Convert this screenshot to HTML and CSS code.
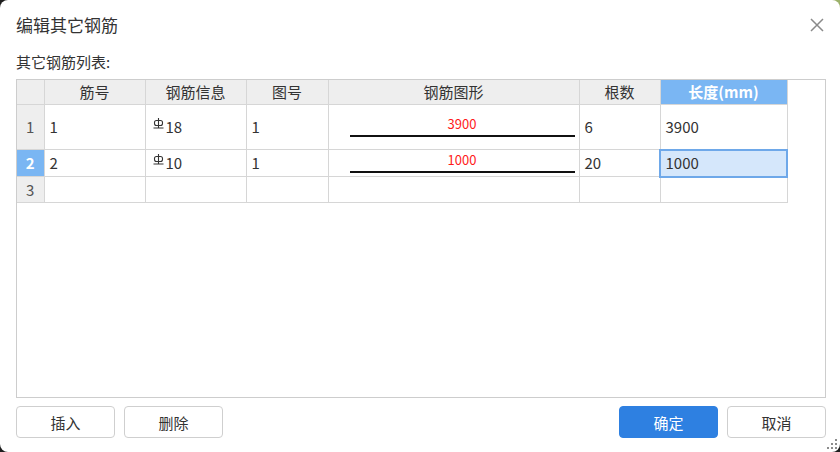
FILE: index.html
```html
<!DOCTYPE html>
<html lang="zh-CN">
<head>
<meta charset="utf-8">
<title>编辑其它钢筋</title>
<link rel="stylesheet" href="styles.css">
</head>
<body>
<div class="dialog">
  <div class="titlebar">
    <span class="title">编辑其它钢筋</span>
    <span class="close" aria-label="关闭">
      <svg width="14" height="14" viewBox="0 0 14 14"><path d="M1 1 L13 13 M13 1 L1 13" stroke="#8a8a8a" stroke-width="1.5" fill="none"/></svg>
    </span>
  </div>
  <div class="label">其它钢筋列表:</div>
  <div class="grid-wrap">
    <table class="grid">
      <colgroup>
        <col class="c-rh"><col class="c-no"><col class="c-info"><col class="c-fig"><col class="c-shape"><col class="c-count"><col class="c-len">
      </colgroup>
      <thead>
        <tr class="hrow">
          <th class="rh"></th>
          <th>筋号</th>
          <th>钢筋信息</th>
          <th>图号</th>
          <th>钢筋图形</th>
          <th>根数</th>
          <th class="sel-h">长度(mm)</th>
        </tr>
      </thead>
      <tbody>
        <tr class="r1">
          <td class="rh">1</td>
          <td>1</td>
          <td><svg class="sym" width="11" height="11" viewBox="0 0 11 11"><path d="M5.5 0 V9.5 M0.5 10 H10.5" stroke="#333" stroke-width="1.1" fill="none"/><rect x="1.5" y="2.5" width="8" height="5" rx="2" stroke="#333" stroke-width="1.1" fill="none"/></svg>18</td>
          <td>1</td>
          <td><div class="shape"><span class="dim">3900</span><span class="line"></span></div></td>
          <td>6</td>
          <td>3900</td>
        </tr>
        <tr class="r2">
          <td class="rh sel-h">2</td>
          <td>2</td>
          <td><svg class="sym" width="11" height="11" viewBox="0 0 11 11"><path d="M5.5 0 V9.5 M0.5 10 H10.5" stroke="#333" stroke-width="1.1" fill="none"/><rect x="1.5" y="2.5" width="8" height="5" rx="2" stroke="#333" stroke-width="1.1" fill="none"/></svg>10</td>
          <td>1</td>
          <td><div class="shape"><span class="dim">1000</span><span class="line"></span></div></td>
          <td>20</td>
          <td class="sel-cell">1000</td>
        </tr>
        <tr class="r3">
          <td class="rh">3</td>
          <td></td><td></td><td></td><td></td><td></td><td></td>
        </tr>
      </tbody>
    </table>
  </div>
  <div class="footer">
    <div class="group">
      <button class="btn">插入</button>
      <button class="btn">删除</button>
    </div>
    <div class="group">
      <button class="btn primary">确定</button>
      <button class="btn">取消</button>
    </div>
  </div>
  <svg class="grip" width="12" height="12" viewBox="0 0 12 12">
    <g fill="#8c8c8c">
      <rect x="9" y="1" width="2" height="2"/>
      <rect x="5" y="5" width="2" height="2"/><rect x="9" y="5" width="2" height="2"/>
      <rect x="1" y="9" width="2" height="2"/><rect x="5" y="9" width="2" height="2"/><rect x="9" y="9" width="2" height="2"/>
    </g>
  </svg>
</div>
</body>
</html>
```

FILE: styles.css
```css
html, body {
  margin: 0;
  padding: 0;
}
body {
  width: 840px;
  height: 452px;
  overflow: hidden;
  background: linear-gradient(#9cb16a, #9cb16a) 262px 0 / 578px 14px no-repeat, #1e1e1e;
  font-family: "Noto Sans CJK SC", "Microsoft YaHei", sans-serif;
  color: #333;
}
.dialog {
  position: relative;
  width: 840px;
  height: 452px;
  box-sizing: border-box;
  background: #fff;
  border-radius: 8px;
  padding: 0 14px 0 16px;
  display: flex;
  flex-direction: column;
}
.titlebar {
  height: 50px;
  display: flex;
  align-items: center;
  justify-content: space-between;
}
.title {
  font-size: 17px;
  color: #333;
  line-height: 20px;
}
.close {
  width: 14px;
  height: 14px;
  margin-right: 2px;
  display: flex;
}
.label {
  margin-top: 2px;
  font-size: 15px;
  line-height: 20px;
  height: 20px;
  color: #333;
}
.grid-wrap {
  margin-top: 7px;
  width: 810px;
  height: 319px;
  box-sizing: border-box;
  border: 1px solid #cdcdcd;
  overflow: hidden;
}
.grid {
  border-collapse: collapse;
  table-layout: fixed;
  font-size: 15px;
  width: 770px;
}
.c-rh { width: 27px; }
.c-no { width: 101px; }
.c-info { width: 101px; }
.c-fig { width: 82px; }
.c-shape { width: 251px; }
.c-count { width: 81px; }
.c-len { width: 127px; }

.grid th, .grid td {
  border-right: 1px solid #d6d6d6;
  border-bottom: 1px solid #d6d6d6;
  padding: 0 0 0 5px;
  text-align: left;
  vertical-align: middle;
  line-height: 18px;
  white-space: nowrap;
  overflow: hidden;
}
.grid th {
  background: #eeeeee;
  font-weight: normal;
  text-align: center;
  padding: 0;
  height: 24px;
}
.grid .rh {
  background: #eeeeee;
  text-align: center;
  padding: 0;
  color: #555;
}
.grid .sel-h {
  background: #7ab6f3;
  color: #fff;
  font-weight: bold;
}
.r1 td { height: 44px; }
.r2 td { height: 26px; }
.r3 td { height: 25px; }

.sel-cell {
  background: #d5e7fb;
  outline: 2px solid #6ea8e9;
  outline-offset: -1px;
}
.sym {
  vertical-align: 4px;
  margin: 0 2px 0 2px;
}
.shape {
  width: 225px;
  margin-left: 16px;
  display: flex;
  flex-direction: column;
  align-items: center;
}
.dim {
  color: #ff1a1a;
  font-size: 13px;
  line-height: 14px;
}
.line {
  display: block;
  width: 225px;
  height: 2px;
  margin-top: 4px;
  background: #111;
}
.footer {
  margin-top: 8px;
  display: flex;
  justify-content: space-between;
  width: 810px;
}
.group {
  display: flex;
  gap: 9px;
}
.btn {
  width: 99px;
  height: 32px;
  box-sizing: border-box;
  border: 1px solid #cfcfcf;
  border-radius: 4px;
  background: #fff;
  color: #333;
  font-family: inherit;
  font-size: 15px;
  padding: 0;
}
.btn.primary {
  background: #2e80e1;
  border-color: #2e80e1;
  color: #fff;
}
.grip {
  position: absolute;
  right: 2px;
  bottom: 2px;
}
```
